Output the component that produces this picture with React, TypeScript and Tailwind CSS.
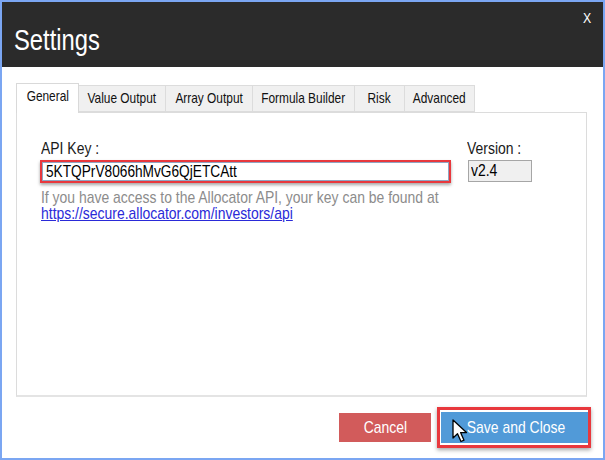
import React from "react";

const tabs = [
  { label: "General", w: 63, active: true },
  { label: "Value Output", w: 87 },
  { label: "Array Output", w: 87 },
  { label: "Formula Builder", w: 102 },
  { label: "Risk", w: 50 },
  { label: "Advanced", w: 70 },
];

function NL({ children, className = "" }: { children: React.ReactNode; className?: string }) {
  return (
    <span className={"inline-block whitespace-nowrap origin-left scale-x-[0.82] " + className}>{children}</span>
  );
}

function NC({ children, className = "" }: { children: React.ReactNode; className?: string }) {
  return (
    <span className={"inline-block whitespace-nowrap origin-center scale-x-[0.82] " + className}>{children}</span>
  );
}

export default function App() {
  return (
    <div className="w-[605px] h-[460px] bg-white overflow-hidden">
      <div className="relative w-[605px] h-[460px] border-2 border-[#7ba6f2] bg-white flex flex-col font-['Liberation_Sans',Arial,sans-serif]">
        {/* Title bar */}
        <div className="relative h-[65px] bg-[#2b2b2b] flex items-center pl-[12px] shrink-0">
          <NL className="text-white text-[29px] leading-none mt-[11px]">Settings</NL>
          <span className="absolute right-[11px] top-[8px] text-white text-[15px] leading-none">
            <NC>X</NC>
          </span>
        </div>

        {/* Body */}
        <div className="flex flex-col pl-[14px] pr-[16px] pt-[16px]">
          {/* Tabs */}
          <div className="flex items-end h-[29px]">
            {tabs.map((t) =>
              t.active ? (
                <div
                  key={t.label}
                  style={{ width: t.w }}
                  className="h-[30px] -mb-px bg-white border border-[#d9d9d9] border-b-0 flex items-center justify-center text-[14.5px] text-[#111] z-10 pb-[4px]"
                >
                  <NC>{t.label}</NC>
                </div>
              ) : (
                <div
                  key={t.label}
                  style={{ width: t.w }}
                  className="h-[27px] bg-[#f0f0f0] border border-[#dcdcdc] border-l-0 flex items-center justify-center text-[14.5px] text-[#111] pt-px"
                >
                  <NC>{t.label}</NC>
                </div>
              )
            )}
          </div>

          {/* Panel */}
          <div className="h-[285px] border border-[#dcdcdc] border-b-2 border-b-[#e4e4e4] bg-white flex pl-[24px] pt-[27px]">
            <div className="flex flex-col w-[426px]">
              <div className="text-[17px] text-[#1a1a1a] leading-none h-[20px]">
                <NL>API Key :</NL>
              </div>
              <div className="w-[411px] h-[23px] border-2 border-[#e8383d] shadow-[0_2px_3px_rgba(0,0,0,0.35)] bg-white -ml-px">
                <div className="w-full h-full border border-[#8fa5c2] flex items-center pl-[3px] text-[16.7px] text-black">
                  <NL>5KTQPrV8066hMvG6QjETCAtt</NL>
                </div>
              </div>
              <div className="mt-[7px] text-[17px] text-[#8c8c8c] leading-[16px]">
                <NL>If you have access to the Allocator API, your key can be found at</NL>
                <br />
                <NL className="underline text-[#2a2ad8]">https://secure.allocator.com/investors/api</NL>
              </div>
            </div>
            <div className="flex flex-col">
              <div className="text-[17px] text-[#1a1a1a] leading-none h-[20px]">
                <NL>Version :</NL>
              </div>
              <div className="w-[64px] h-[22px] border border-[#a6a6a6] bg-[#f0f0f0] flex items-center pl-[2px] text-[17px] text-black ml-px">
                <NL>v2.4</NL>
              </div>
            </div>
          </div>

          {/* Buttons */}
          <div className="flex justify-end items-center mt-[10px]">
            <div className="w-[92px] h-[29px] bg-[#d25b5b] text-white text-[17px] flex items-center justify-center mr-[6px]">
              <NC>Cancel</NC>
            </div>
            <div className="relative w-[154px] h-[41px] border-[3px] border-[#e8383d] shadow-[0_2px_4px_rgba(0,0,0,0.35)] flex items-center justify-center -mr-[4px]">
              <div className="w-[147px] h-[31px] bg-[#519ad8] text-white text-[17px] flex items-center justify-center pl-[4px]">
                <NC>Save and Close</NC>
              </div>
              <svg className="absolute left-[12px] top-[9px]" width="17" height="25" viewBox="0 0 17 25">
                <path
                  d="M1 1 L1 19 L5.5 14.8 L9 22.5 L12 21.2 L8.6 13.6 L14.5 13.6 Z"
                  fill="white"
                  stroke="black"
                  strokeWidth="1.3"
                  strokeLinejoin="round"
                />
              </svg>
            </div>
          </div>
        </div>
      </div>
    </div>
  );
}
